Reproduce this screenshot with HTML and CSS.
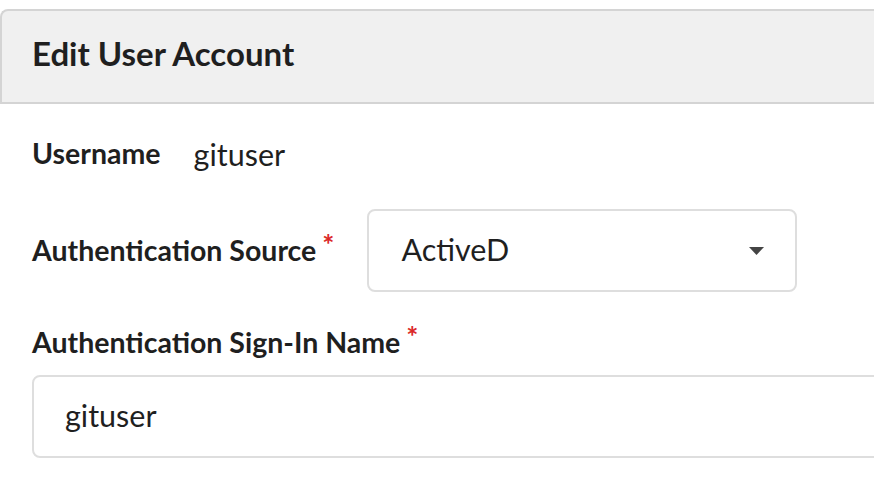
FILE: index.html
```html
<!DOCTYPE html>
<html lang="en">
<head>
<meta charset="utf-8">
<title>Edit User Account</title>
<link rel="stylesheet" href="styles.css">
</head>
<body>
<div class="page">
  <h4 class="header">Edit User Account</h4>
  <form class="form">
    <div class="field inline">
      <label class="label">Username</label>
      <span class="value">gituser</span>
    </div>
    <div class="field inline required">
      <label class="label">Authentication Source</label>
      <div class="dropdown">
        <span class="dropdown-text">ActiveD</span>
        <svg class="caret" width="15" height="8" viewBox="0 0 15 8" aria-hidden="true"><path d="M0 0H15L7.5 8Z" fill="#444"/></svg>
      </div>
    </div>
    <div class="field required stacked">
      <label class="label">Authentication Sign-In Name</label>
      <input class="input" type="text" value="gituser">
    </div>
  </form>
</div>
</body>
</html>
```
FILE: styles.css
```css
html, body {
  margin: 0;
  padding: 0;
  background: #ffffff;
  overflow: hidden;
}
body {
  font-family: Lato, "Open Sans", sans-serif;
  color: #1f1f1f;
}
.page {
  margin-top: 9px;
  margin-right: -60px;
}
.header {
  margin: 0;
  padding: 22px 0 29px 30px;
  line-height: 40px;
  font-size: 33px;
  font-weight: 700;
  background: #f0f0f0;
  border: 2px solid #d4d4d4;
  border-right: none;
  border-radius: 8px 0 0 0;
}
.form {
  padding: 29px 0 0 32px;
  display: flex;
  flex-direction: column;
}
.field {
  display: flex;
}
.inline {
  align-items: center;
}
.label {
  font-size: 28.5px;
  font-weight: 700;
  line-height: 40px;
  margin-right: 33px;
}
.inline .label {
  padding-bottom: 2px;
}
.required .label::after {
  content: "*";
  color: #db2828;
  margin-left: 6px;
  vertical-align: top;
  position: relative;
  top: -6px;
}
.value {
  font-size: 30.5px;
  line-height: 40px;
}
.field + .field {
  margin-top: 34px;
}
.stacked {
  flex-direction: column;
  margin-top: 30px !important;
}
.stacked .label {
  margin-bottom: 13px;
}
.dropdown {
  box-sizing: border-box;
  width: 430px;
  height: 83px;
  border: 2px solid #dedede;
  border-radius: 8px;
  display: flex;
  align-items: center;
  justify-content: space-between;
  padding: 0 31px 0 32px;
}
.dropdown-text {
  font-size: 30.5px;
  line-height: 40px;
  padding-bottom: 3px;
}
.caret {
  display: block;
}
.input {
  box-sizing: border-box;
  width: 100%;
  height: 83px;
  border: 2px solid #dedede;
  border-radius: 8px;
  padding: 0 31px 3px;
  font-family: Lato, "Open Sans", sans-serif;
  font-size: 30.5px;
  color: #1f1f1f;
  background: #fff;
  outline: none;
}
```
